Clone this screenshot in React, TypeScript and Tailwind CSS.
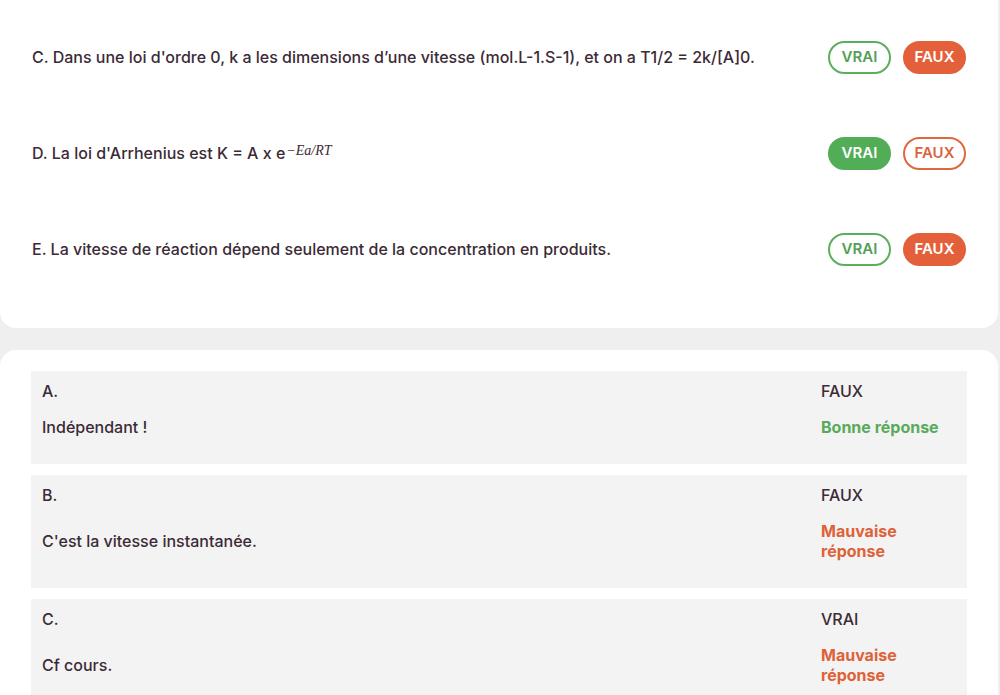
import React from 'react';

type Choice = 'vrai' | 'faux' | null;

const questions: { id: string; text: React.ReactNode; choice: Choice }[] = [
  { id: 'C', text: <>C. Dans une loi d'ordre 0, k a les dimensions d’une vitesse (mol.L-1.S-1), et on a T1/2 = 2k/[A]0.</>, choice: 'faux' },
  {
    id: 'D',
    text: (
      <>
        D. La loi d'Arrhenius est K = A x e
        <sup className="relative -top-[4px] ml-[1px] font-['Liberation_Serif',serif] text-[14px] font-normal italic">−Ea/RT</sup>
      </>
    ),
    choice: 'vrai',
  },
  { id: 'E', text: <>E. La vitesse de réaction dépend seulement de la concentration en produits.</>, choice: 'faux' },
];

const corrections = [
  { id: 'A.', answer: 'FAUX', text: 'Indépendant !', ok: true },
  { id: 'B.', answer: 'FAUX', text: "C'est la vitesse instantanée.", ok: false },
  { id: 'C.', answer: 'VRAI', text: 'Cf cours.', ok: false },
];

function Pill({ label, active, tone }: { label: string; active: boolean; tone: 'green' | 'orange' }) {
  const green = tone === 'green';
  const cls = active
    ? green
      ? 'bg-[#52ad57] border-[#52ad57] text-white'
      : 'bg-[#e3603a] border-[#e3603a] text-white'
    : green
      ? 'bg-white border-[#5aae5e] text-[#52a056]'
      : 'bg-white border-[#e0683f] text-[#d9643c]';
  return (
    <button type="button" className={`flex h-[33px] w-[63px] items-center justify-center rounded-full border-2 text-[15px] font-semibold ${cls}`}>
      {label}
    </button>
  );
}

export default function App() {
  return (
    <div className="min-h-[695px] w-[1000px] overflow-hidden bg-[#efefef] pr-[2px] font-['Inter',sans-serif] text-[#3b2b36]">
      <div className="rounded-b-[16px] bg-white px-[32px] pt-[9px] pb-[31px]">
        {questions.map((q) => (
          <div key={q.id} className="flex h-[96px] items-center justify-between">
            <p className="text-[16px] font-medium">{q.text}</p>
            <div className="flex gap-[12px]">
              <Pill label="VRAI" tone="green" active={q.choice === 'vrai'} />
              <Pill label="FAUX" tone="orange" active={q.choice === 'faux'} />
            </div>
          </div>
        ))}
      </div>

      <div className="mt-[22px] flex flex-col gap-[11px] rounded-t-[16px] bg-white px-[31px] pt-[21px]">
        {corrections.map((c) => (
          <div key={c.id} className="grid grid-cols-[1fr_136px] items-center bg-[#f3f3f3] pl-[11px] pr-[10px] pt-[10px] pb-[10px] text-[16px] font-medium leading-[20px]">
            <p className="mb-[16px]">{c.id}</p>
            <p className="mb-[16px]">{c.answer}</p>
            <p className="mb-[16px]">{c.text}</p>
            <p className={`mb-[16px] font-bold leading-[20.5px] ${c.ok ? 'text-[#58ab5b]' : 'text-[#de6238]'}`}>
              {c.ok ? 'Bonne réponse' : 'Mauvaise réponse'}
            </p>
          </div>
        ))}
      </div>
    </div>
  );
}
